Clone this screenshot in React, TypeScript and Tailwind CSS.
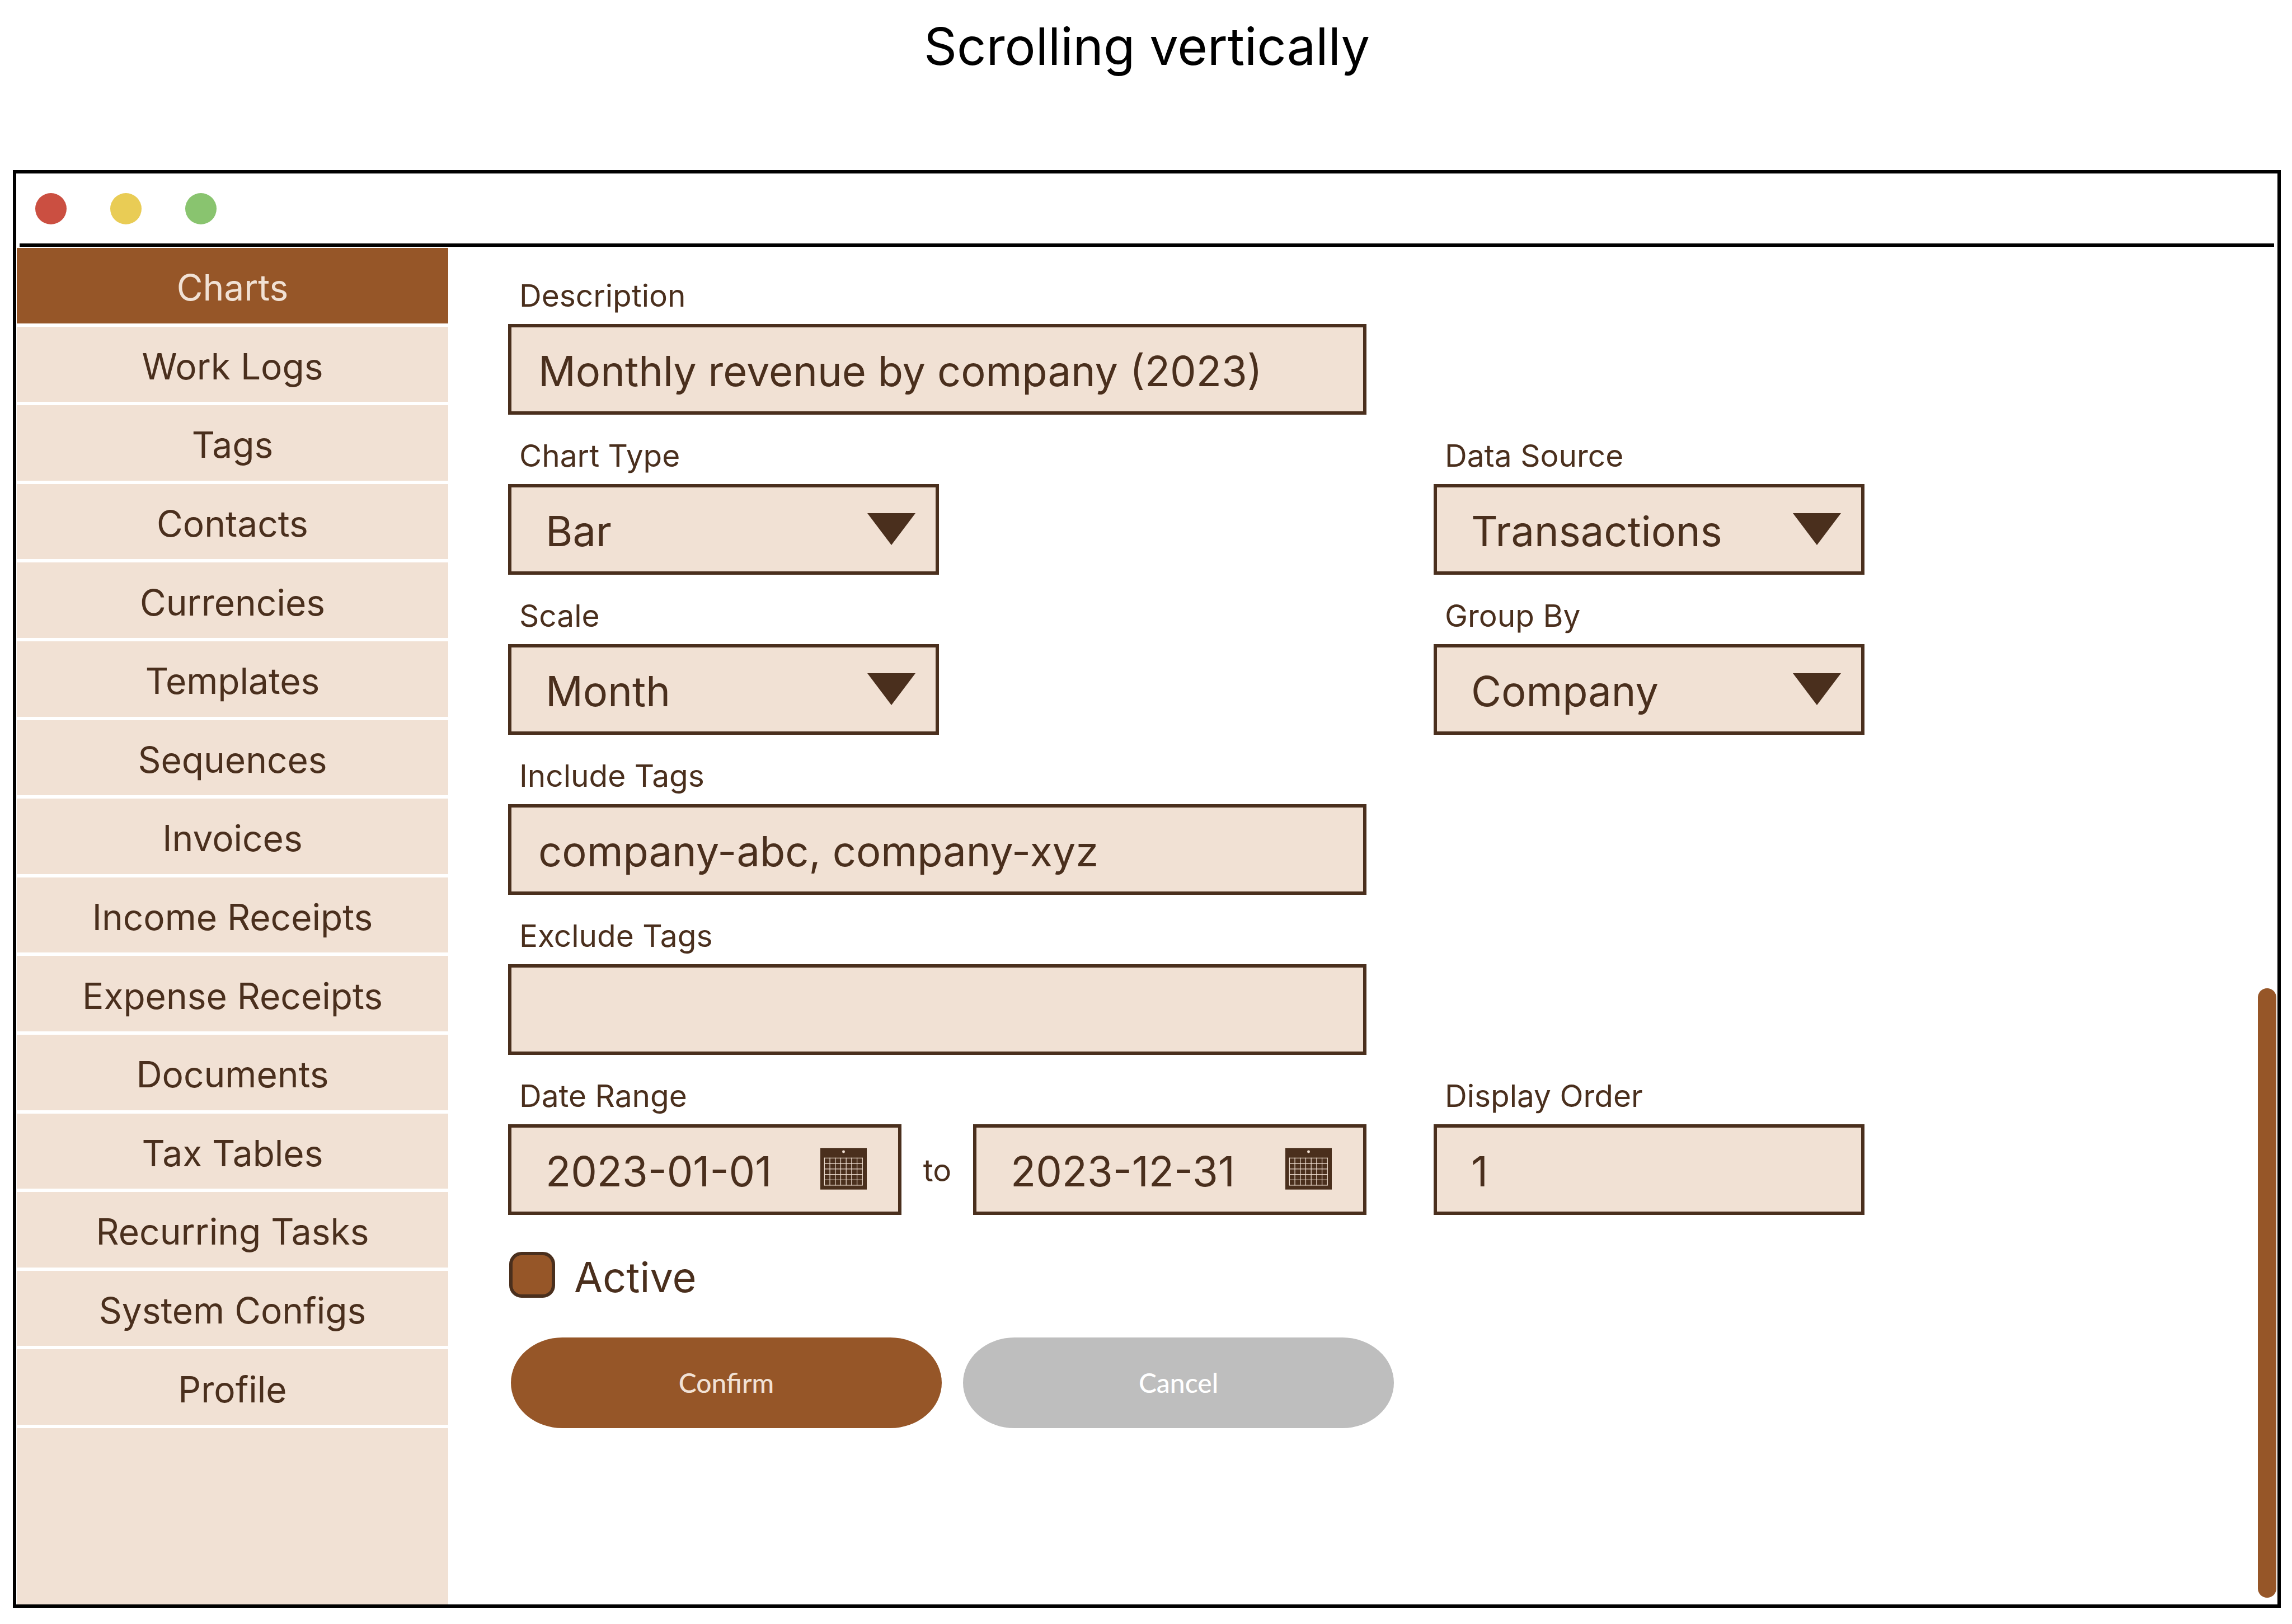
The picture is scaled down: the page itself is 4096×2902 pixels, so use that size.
import React from "react";

const NAV_ITEMS = [
  "Charts",
  "Work Logs",
  "Tags",
  "Contacts",
  "Currencies",
  "Templates",
  "Sequences",
  "Invoices",
  "Income Receipts",
  "Expense Receipts",
  "Documents",
  "Tax Tables",
  "Recurring Tasks",
  "System Configs",
  "Profile",
];

const LABEL = "block h-[83px] pl-[20px] text-[55px] leading-[64px] text-[#4a2f1d]";
const BOX =
  "h-[162px] w-full appearance-none rounded-none border-6 border-[#4a2f1d] bg-[#f1e1d4] pt-[6px] text-[74px] leading-[100px] text-[#4a2f1d] outline-none";

function TextField({ id, label, value, inset = "pl-[48px]" }: { id: string; label: string; value: string; inset?: string }) {
  return (
    <div>
      <label htmlFor={id} className={LABEL}>
        {label}
      </label>
      <input id={id} type="text" defaultValue={value} className={`${BOX} ${inset}`} />
    </div>
  );
}

function SelectField({ id, label, options }: { id: string; label: string; options: string[] }) {
  return (
    <div className="w-[770px]">
      <label htmlFor={id} className={LABEL}>
        {label}
      </label>
      <div className="relative">
        <select id={id} className={`${BOX} pl-[61px]`}>
          {options.map((o) => (
            <option key={o}>{o}</option>
          ))}
        </select>
        <svg
          viewBox="0 0 86 57"
          className="pointer-events-none absolute top-[52px] right-[42px] h-[57px] w-[86px] fill-[#4a2f1d]"
          aria-hidden="true"
        >
          <path d="M0 0H86L43 57Z" />
        </svg>
      </div>
    </div>
  );
}

function CalendarIcon() {
  const cols = [0, 1, 2, 3, 4, 5, 6, 7];
  const rows = [0, 1, 2, 3, 4, 5];
  return (
    <svg viewBox="0 0 124 111" className="h-[75px] w-[83px]" aria-hidden="true">
      <rect width="124" height="111" fill="#4a2f1d" />
      <circle cx="62" cy="10" r="3.7" fill="#f1e1d4" />
      <g stroke="#f1e1d4" strokeWidth="1.8">
        {cols.map((c) => (
          <path key={c} d={`M${11 + c * 14.5} 26V100`} />
        ))}
        {rows.map((r) => (
          <path key={r} d={`M10.5 ${27 + r * 14.5}H113`} />
        ))}
      </g>
    </svg>
  );
}

function DateField({ id, label, value }: { id: string; label: string; value: string }) {
  return (
    <div className="relative flex-1">
      <input id={id} type="text" aria-label={label} defaultValue={value} className={`${BOX} pl-[61px]`} />
      <button type="button" aria-label={`Pick ${label}`} className="absolute top-[42px] right-[62px]">
        <CalendarIcon />
      </button>
    </div>
  );
}

export default function App() {
  return (
    <div className="flex min-h-screen flex-col bg-white pr-[20px] pb-[29px] pl-[23px] font-['Inter','Liberation_Sans',sans-serif]">
      <h1 className="h-[304px] pt-[23px] text-center text-[92px] leading-[120px] text-black">Scrolling vertically</h1>

      <div className="flex flex-1 flex-col border-6 border-black">
        <header className="mx-[6px] flex h-[131px] items-start gap-[78px] border-b-6 border-black pt-[35px] pl-[28px]">
          <span className="size-[56px] rounded-full bg-[#cb4f41]" />
          <span className="size-[56px] rounded-full bg-[#e9cc55]" />
          <span className="size-[56px] rounded-full bg-[#89c46f]" />
        </header>

        <div className="flex flex-1 pt-[2px]">
          <nav className="flex w-[772px] flex-col pl-[1px]">
            <ul className="flex flex-1 flex-col">
              {NAV_ITEMS.map((item, i) => (
                <li key={item} className="flex flex-1 flex-col pb-[6px]">
                  <a
                    href="#"
                    aria-current={i === 0 ? "page" : undefined}
                    className={`flex flex-1 items-center justify-center pt-[8px] text-[64px] leading-[76px] ${
                      i === 0 ? "bg-[#965628] text-[#f1e1d4]" : "bg-[#f1e1d4] text-[#4a2f1d]"
                    }`}
                  >
                    {item}
                  </a>
                </li>
              ))}
            </ul>
            <div className="h-[315px] bg-[#f1e1d4]" />
          </nav>

          <main className="flex-1 pt-[53px] pl-[107px]">
            <form>
              <div className="grid grid-cols-[1534px_770px] gap-x-[120px] gap-y-[41px]">
                <div className="col-span-2 w-[1534px]">
                  <TextField id="description" label="Description" value="Monthly revenue by company (2023)" />
                </div>
                <SelectField id="type" label="Chart Type" options={["Bar"]} />
                <SelectField id="source" label="Data Source" options={["Transactions"]} />
                <SelectField id="scale" label="Scale" options={["Month"]} />
                <SelectField id="group" label="Group By" options={["Company"]} />
                <div className="col-span-2 w-[1534px]">
                  <TextField id="include" label="Include Tags" value="company-abc, company-xyz" />
                </div>
                <div className="col-span-2 w-[1534px]">
                  <TextField id="exclude" label="Exclude Tags" value="" />
                </div>
                <fieldset>
                  <legend className={LABEL}>Date Range</legend>
                  <div className="flex">
                    <DateField id="from" label="start date" value="2023-01-01" />
                    <span className="w-[128px] pt-[50px] text-center text-[55px] leading-[64px] text-[#4a2f1d]">to</span>
                    <DateField id="until" label="end date" value="2023-12-31" />
                  </div>
                </fieldset>
                <TextField id="order" label="Display Order" value="1" inset="pl-[61px]" />
              </div>

              <div className="mt-[66px] flex items-center gap-[34px] pl-[2px]">
                <input
                  id="active"
                  type="checkbox"
                  defaultChecked
                  className="size-[82px] appearance-none rounded-[22px] border-6 border-[#4a2f1d] bg-[#965628]"
                />
                <label htmlFor="active" className="pt-[8px] text-[74px] leading-[74px] text-[#4a2f1d]">
                  Active
                </label>
              </div>

              <div className="mt-[71px] flex gap-[38px] pl-[5px] font-['Lato','Liberation_Sans',sans-serif] text-[48px] font-medium">
                <button type="button" className="h-[162px] w-[770px] rounded-[92px_/_81px] bg-[#965628] text-[#f1e1d4]">
                  Confirm
                </button>
                <button type="button" className="h-[162px] w-[770px] rounded-[92px_/_81px] bg-[#bebebe] text-white">
                  Cancel
                </button>
              </div>
            </form>
          </main>

          <div className="mr-[2px] mb-[12px] h-[1089px] w-[33px] self-end rounded-full bg-[#965628]" />
        </div>
      </div>
    </div>
  );
}
